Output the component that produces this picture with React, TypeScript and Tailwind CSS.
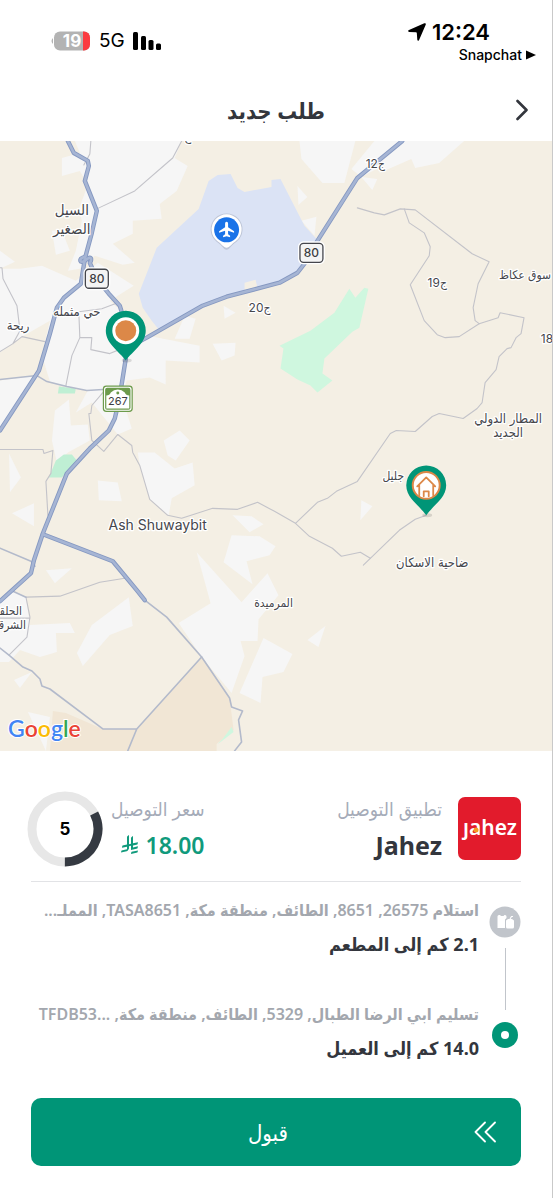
import type { ReactNode } from "react";

// ---------------------------------------------------------------------------
// Map data
// ---------------------------------------------------------------------------

const URBAN = [
  "M75 0H182L175 17L188 25L177 50L160 63L162 78L133 80V93L113 103L135 122L123 124L95 115L80 128L68 130L76 110L82 80L79 68L88 44L80 30L62 35V17L80 12Z",
  "M0 110L15 121L0 128ZM0 128L20 128L42 125L76 140L98 122L134 145L110 160L126 175L148 195L200 205V222L166 220V244L150 237L127 240L122 256L132 288L118 294L92 262L76 272L88 250L66 246L50 241L42 215L50 180L22 196L0 212Z",
  "M0 240L37 235L0 290ZM52 90H62L70 110L56 114ZM185 175L196 178L190 198L175 198Z",
  "M300 0H356L345 42H323L302 18ZM375 0H403L392 20L362 36L352 28ZM403 0H465L440 22L416 27L412 18L380 32ZM298 45L308 56L299 64ZM302 80L317 76L315 95Z",
  "M362 36L378 38L373 49ZM224 165L236 172L225 178ZM213 203L236 202L235 215L222 220ZM164 300L180 290L190 300L176 320L168 315Z",
  "M55 270L69 259L71 285L88 284L90 300L68 312L57 322L52 300ZM9 313L21 337L10 352ZM98 340L118 342L122 361L99 360ZM12 373L34 363V386Z",
  "M138 312L155 312L175 328L193 322L195 345L172 358L169 375L150 359L140 325Z",
  "M197 412L242 462L268 433L279 455L259 479L258 501H241L245 516L232 553L202 517L179 483L211 463Z",
  "M232 395L260 396L276 406L270 415L247 421L253 444L224 422ZM264 498L293 514L284 532L263 537L261 563L240 553ZM308 500L326 486L319 507Z",
  "M46 430L72 428L55 443ZM129 457L133 486L110 495L83 526L77 513L92 485ZM14 540L32 532L20 548ZM28 572L50 577L46 611Z",
  "M0 461L13 451L26 457L30 485L70 483L75 493L56 493L57 512L40 517L20 510L9 522H0ZM362 360L373 366L361 380ZM233 375L252 376L264 384L250 392Z",
];

const GREEN = [
  "M350 148L356 157L365 147L369 148L360 187L353 191L325 218L323 233L333 240L318 252L311 245L298 239L281 228L284 208L280 205L311 190L335 172Z",
];

const PARKS = [
  "M59 246L76 248L75 253H58Z",
  "M49 337L56 320L64 314H72L77 320L62 337Z",
];

const TRACKS = [
  "M182 0L173 17L135 50L97 68M91 0L90 13L84 24",
  "M0 127L2 127L3 138L17 165L20 190L13 203M0 211L13 203L22 196L45 201",
  "M79 173L80 197L72 215L66 245M80 197H92L91 209L110 213L122 208M79 171L102 168L118 162",
  "M103 252L92 265L91 273H89L92 300L104 311L118 294L132 305L133 312L140 325L150 359L168 375L182 378L213 368L238 369L258 362L275 371L296 383L310 396L333 408L342 416L361 412L371 418",
  "M0 309H43L44 313L53 310L51 333L46 341L48 375",
  "M296 383L318 362L328 358L337 351L358 341L391 293L397 290L416 291L433 276L440 273L464 278L478 268L483 262L486 242L497 229L500 216L508 208L512 207L517 197L522 193L525 177L501 172L499 177L480 183L460 196L446 197L438 194L425 180L411 144L430 115L431 106L425 92L410 82L405 68",
  "M358 67L375 72L385 74L401 68L416 69L473 113L490 121L479 143L474 167L476 180L480 183",
  "M364 425L400 390L416 379L427 375",
  "M26 457L60 456L100 442L125 438M26 457L30 477L27 497L9 515M0 478H30",
];

const MINOR = [
  "M0 239L37 235L47 241L67 246L87 250L103 249",
  "M0 408L31 421L35 426",
  "M13 451L26 457",
  "M145 460L167 477L202 517L230 558L232 567L243 571L239 580L242 602L235 611",
  "M202 517L137 589L128 611M137 589H103L50 549L42 546L40 539L32 531L23 527L9 515L0 508",
];

const HIGHWAYS = [
  "M68 0L74 12L88 20L89 25L85 40L97 70L92 92L85 118L81 143L64 157L57 167L50 193L39 230L0 290",
  "M85 116C78 118 80 123 85 120C94 112 91 122 90 122L97 138L109 153L120 165L126 185",
  "M130 206L147 197L203 165L227 156L280 142L298 132L305 123L318 100L358 37L403 0",
  "M126 218L122 243L118 265L115 278L109 290L90 308L67 333L43 393L34 420L31 433L0 461",
  "M43 394L113 421L137 450L145 460",
];

interface MapLabel {
  text: string;
  x: number;
  y: number;
  size: string;
}

const LABELS: MapLabel[] = [
  { text: "السيل",          x: 72,  y: 74,  size: "text-[15px]" },
  { text: "الصغير",         x: 72,  y: 93,  size: "text-[15px]" },
  { text: "حي مثمله",       x: 77,  y: 175, size: "text-[13px]" },
  { text: "ريحة",           x: 18,  y: 189, size: "text-[13px]" },
  { text: "ج12",            x: 376, y: 27,  size: "text-[12px]" },
  { text: "ج19",            x: 438, y: 146, size: "text-[12px]" },
  { text: "ج20",            x: 260, y: 171, size: "text-[12px]" },
  { text: "سوق عكاظ",       x: 526, y: 138, size: "text-[12px]" },
  { text: "18",             x: 548, y: 202, size: "text-[12px]" },
  { text: "المطار الدولي",  x: 509, y: 283, size: "text-[13px]" },
  { text: "الجديد",         x: 509, y: 297, size: "text-[13px]" },
  { text: "جليل",           x: 394, y: 340, size: "text-[12px]" },
  { text: "ضاحية الاسكان",  x: 433, y: 427, size: "text-[13px]" },
  { text: "المرميدة",       x: 274, y: 467, size: "text-[12px]" },
  { text: "الحلقة",         x: 8,   y: 475, size: "text-[12px]" },
  { text: "الشرقية",        x: 8,   y: 489, size: "text-[12px]" },
  { text: "Ash Shuwaybit",  x: 158, y: 390, size: "text-[14px]" },
];

// ---------------------------------------------------------------------------
// Map pieces
// ---------------------------------------------------------------------------

function RoadShield({ x, y }: { x: number; y: number }) {
  return (
    <g transform={`translate(${x} ${y})`}>
      <rect x="-12" y="-10" width="24" height="20" rx="4" fill="#f4f4f4" stroke="#fff" strokeWidth="3" />
      <rect x="-11.5" y="-9.5" width="23" height="19" rx="3.5" fill="#f4f4f4" stroke="#45464c" strokeWidth="1.3" />
      <text textAnchor="middle" y="4.5" className="font-['Inter'] text-[12px] font-medium" fill="#3c3d42">
        80
      </text>
    </g>
  );
}

function Pin({ x, y, children }: { x: number; y: number; children: ReactNode }) {
  return (
    <g transform={`translate(${x} ${y})`}>
      <ellipse cx="1" cy="0" rx="5" ry="2" fill="#000" opacity="0.12" />
      <path d="M0 0C-7 -10 -20 -17 -20 -30A20 20 0 0 1 20 -30C20 -17 7 -10 0 0Z" fill="#009577" />
      {children}
    </g>
  );
}

function DeliveryMap() {
  return (
    <svg viewBox="0 0 553 611" className="block h-auto w-full" role="img" aria-label="Map">
      <rect width="553" height="611" fill="#f4efe4" />
      <g fill="#f6f6f6">
        {URBAN.map((d) => <path key={d} d={d} />)}
      </g>
      <path d="M202 517L230 558L234 590L217 604V611H50L53 571L66 573L103 589H137Z" fill="#f1e6d5" />
      <path d="M232 587L234 592L221 602L218 604L223 599Z" fill="#cff7df" />
      <path
        d="M160 190L152 180L143 167L139 153L157 107L199 68L209 40L218 34L231 33L238 47L245 51L272 46V39L281 38L305 85L317 98L305 123L298 132L280 142L227 156L203 165Z"
        fill="#dbe3f5"
      />
      <path d="M245 142L256 139L258 147L245 150Z" fill="#f4efe4" />
      <g fill="#cff7df">
        {GREEN.map((d) => <path key={d} d={d} />)}
      </g>
      <g fill="#bfefd4">
        {PARKS.map((d) => <path key={d} d={d} />)}
      </g>
      <g fill="none" strokeLinejoin="round" strokeLinecap="round">
        <g stroke="#c3c3c9" strokeWidth="1.1">
          {TRACKS.map((d) => <path key={d} d={d} />)}
        </g>
        <g stroke="#b3bacb" strokeWidth="1.6">
          {MINOR.map((d) => <path key={d} d={d} />)}
        </g>
        <g stroke="#8598c1" strokeWidth="4.4">
          {HIGHWAYS.map((d) => <path key={d} d={d} />)}
        </g>
        <g stroke="#a6b5d4" strokeWidth="2.6">
          {HIGHWAYS.map((d) => <path key={d} d={d} />)}
        </g>
      </g>

      {/* Place names */}
      <g
        fill="#45464c"
        stroke="#fff"
        strokeWidth="2.5"
        strokeLinejoin="round"
        className="font-['Inter','DejaVu_Sans_Condensed','DejaVu_Sans',sans-serif] [paint-order:stroke]"
      >
        {LABELS.map((l) => (
          <text key={l.text} x={l.x} y={l.y} textAnchor="middle" className={l.size}>
            {l.text}
          </text>
        ))}
        <text x="188" y="0" textAnchor="middle" className="text-[12px]">ج</text>
      </g>

      <RoadShield x={97} y={138} />
      <RoadShield x={312} y={112} />

      {/* Route 267 */}
      <g transform="translate(118 258)">
        <rect x="-15" y="-13" width="30" height="26.5" rx="3.5" fill="#6d9b4c" />
        <rect x="-13.8" y="-11.8" width="27.6" height="24" rx="2.6" fill="#fff" />
        <rect x="-12.7" y="-10.8" width="25.4" height="22" rx="2" fill="#6d9b4c" />
        <path d="M-11.5 10V-3Q-8 -3 -7 -6Q-4 -9 0 -9Q4 -9 7 -6Q8 -3 11.5 -3V10Z" fill="#fff" />
        <circle cy="-5.5" r="1.5" fill="#6d9b4c" />
        <text textAnchor="middle" y="6" className="font-['Inter'] text-[11px]" fill="#3c3d42">267</text>
      </g>

      {/* Airport */}
      <g transform="translate(227 89)">
        <path d="M0 20C-3 20 -5 15 -10 12A16 16 0 1 1 10 12C5 15 3 20 0 20Z" fill="#aab2c4" opacity="0.6" />
        <path d="M0 18C-3 18 -5 14 -9 11.5A15 15 0 1 1 9 11.5C5 14 3 18 0 18Z" fill="#fff" />
        <circle r="12.5" fill="#1a73e8" />
        <path
          d="M0 -8C1 -8 1.5 -7 1.5 -6V-2.5L7.5 1.500V3L1.5 1V4.5L3.5 6V7.3L0 6.3L-3.5 7.3V6L-1.5 4.5V1L-7.5 3V1.5L-1.5 -2.5V-6C-1.5 -7 -1 -8 0 -8Z"
          fill="#fff"
        />
      </g>

      <Pin x={126} y={220}>
        <circle cy="-30" r="13.5" fill="#fff" />
        <circle cy="-30" r="10.5" fill="#dc8848" />
      </Pin>
      <Pin x={427} y={375}>
        <circle cy="-30" r="13.5" fill="#fff" stroke="#dc8848" strokeWidth="2" />
        <g fill="none" stroke="#dc8848" strokeWidth="1.8" strokeLinecap="round" strokeLinejoin="round">
          <path d="M-9 -29L0 -38L9 -29M-7 -30V-20M7 -30V-20M-2.5 -19V-24H2.5V-19" />
        </g>
      </Pin>

      <text
        x="8"
        y="597"
        direction="ltr"
        stroke="#fff"
        strokeWidth="2"
        className="font-['Lato'] text-[23px] font-semibold [paint-order:stroke]"
      >
        <tspan fill="#4285f4">G</tspan>
        <tspan fill="#ea4335">o</tspan>
        <tspan fill="#fbbc04">o</tspan>
        <tspan fill="#4285f4">g</tspan>
        <tspan fill="#34a853">l</tspan>
        <tspan fill="#ea4335">e</tspan>
      </text>
    </svg>
  );
}

// ---------------------------------------------------------------------------
// Header
// ---------------------------------------------------------------------------

function StatusBar() {
  return (
    <div dir="ltr" className="flex h-[72px] items-start justify-between pr-4 pl-[51px] pt-5 font-['Inter'] text-black">
      <div className="flex items-center gap-2 pt-[9px]">
        <svg viewBox="0 0 40 20" className="h-5 w-10" aria-hidden="true">
          <path d="M2 7Q-1 10 2 13Z" fill="#b3b3b3" />
          <rect x="3" y="0.5" width="36" height="19" rx="6" fill="#b3b3b3" />
          <path d="M32 0.5H33A6 6 0 0 1 39 6.5V13.5A6 6 0 0 1 33 19.5H32Z" fill="#fb3b40" />
          <text x="21" y="16" textAnchor="middle" className="text-[17px] font-bold" fill="#fff">19</text>
        </svg>
        <span className="text-[19px] leading-6">5G</span>
        <svg viewBox="0 0 28 18" className="h-[18px] w-7" aria-hidden="true">
          <rect width="5" height="18" rx="1.5" />
          <rect x="8" y="4" width="5" height="14" rx="1.5" />
          <rect x="15.5" y="8" width="5" height="10" rx="1.5" />
          <rect x="23" y="11.5" width="5" height="6.5" rx="1.5" />
        </svg>
      </div>
      <div className="flex flex-col items-end">
        <div className="flex items-center gap-[6px] pr-[46px]">
          <svg viewBox="0 0 18 18" className="size-[18px]" aria-hidden="true">
            <path d="M16.3 0.3Q18.3 -0.3 17.7 1.7L11.2 16.8Q10 19 9.3 16.8L8.8 10Q8.7 9.3 8 9.3L1.2 8.900Q-1 8.200 1 7Z" />
          </svg>
          <span className="text-[22px] leading-6 font-semibold">12:24</span>
        </div>
        <div className="flex items-center gap-1 pt-px">
          <span className="text-[14px] leading-5 font-medium">Snapchat</span>
          <svg viewBox="0 0 10 10" className="size-[10px]" aria-hidden="true">
            <path d="M0 0.5L10 5L0 9.5Z" />
          </svg>
        </div>
      </div>
    </div>
  );
}

function Header() {
  return (
    <header className="grid h-[69px] grid-cols-[40px_1fr_40px] items-center px-[10px] pt-[6px]">
      <button type="button" aria-label="رجوع" className="flex justify-center">
        <svg viewBox="0 0 12 22" className="h-[22px] w-3" fill="none" stroke="#33363d" strokeWidth="2.6" strokeLinecap="round" strokeLinejoin="round">
          <path d="M1.5 2L10.5 11L1.5 20" />
        </svg>
      </button>
      <h1 className="text-center text-[22px] leading-8 font-bold">طلب جديد</h1>
    </header>
  );
}

// ---------------------------------------------------------------------------
// Order summary
// ---------------------------------------------------------------------------

function JahezLogo() {
  return (
    <svg viewBox="0 0 63 63" className="size-[63px] shrink-0" aria-label="Jahez" role="img">
      <rect width="63" height="63" rx="7" fill="#e21b2c" />
      <text x="32" y="38" textAnchor="middle" direction="ltr" className="font-['Noto_Sans'] text-[21px] font-semibold" fill="#fff">
        ȷahez
      </text>
      <circle cx="18" cy="33" r="2.5" fill="#f59a23" />
    </svg>
  );
}

function RiyalSign() {
  return (
    <svg viewBox="0 0 1125 1257" className="h-[19px] w-[17px]" fill="currentColor" aria-label="ريال" role="img">
      <path d="M699.62 1113.02c-20.06 44.48-33.32 92.75-38.4 143.37l424.51-90.24c20.06-44.47 33.31-92.75 38.4-143.37l-424.51 90.24Z" />
      <path d="M1085.73 895.8c20.06-44.47 33.32-92.75 38.4-143.37l-330.68 70.33v-135.2l292.27-62.11c20.06-44.47 33.32-92.75 38.4-143.37l-330.68 70.27V66.13c-50.67 28.45-95.67 66.32-132.25 110.99v403.35l-132.25 28.11V0c-50.67 28.44-95.67 66.32-132.25 110.99v525.69l-295.91 62.88c-20.06 44.47-33.33 92.75-38.42 143.37l334.33-71.05v170.26l-358.3 76.14c-20.06 44.47-33.32 92.75-38.4 143.37l375.04-79.7c30.53-6.35 56.77-24.4 73.83-49.24l68.78-101.97c7.14-10.55 11.3-23.27 11.3-36.97v-149.98l132.25-28.11v270.4l424.53-90.28Z" />
    </svg>
  );
}

function Countdown({ seconds, ratio }: { seconds: number; ratio: number }) {
  const length = 2 * Math.PI * 33;
  return (
    <svg viewBox="0 0 76 76" className="size-[76px] shrink-0" role="timer">
      <circle cx="38" cy="38" r="33" fill="none" stroke="#e7e7e7" strokeWidth="9" />
      <circle
        cx="38"
        cy="38"
        r="33"
        fill="none"
        stroke="#353a42"
        strokeWidth="9"
        strokeDasharray={`${length * ratio} ${length}`}
        transform="rotate(-28 38 38)"
      />
      <text x="38" y="44" textAnchor="middle" className="font-['Inter'] text-[17px] font-bold" fill="#000">
        {seconds}
      </text>
    </svg>
  );
}

function OrderSummary() {
  return (
    <section className="flex items-center border-b border-[#e2e3e6] pt-10 pb-[14px]">
      <JahezLogo />
      <div className="mr-4">
        <p className="text-[19px] leading-8 text-[#a5abb8]">تطبيق التوصيل</p>
        <p className="text-[25px] leading-10 font-bold">
          <bdi>Jahez</bdi>
        </p>
      </div>
      <div className="mr-auto">
        <p className="text-[19px] leading-8 text-[#a5abb8]">سعر التوصيل</p>
        <p className="flex items-center gap-2 text-[23px] leading-10 font-semibold text-[#109a7c]">
          <span>18.00</span>
          <RiyalSign />
        </p>
      </div>
      <div className="mr-2 -ml-1">
        <Countdown seconds={5} ratio={0.328} />
      </div>
    </section>
  );
}

// ---------------------------------------------------------------------------
// Stops
// ---------------------------------------------------------------------------

function StopText({ address, distance }: { address: string; distance: string }) {
  return (
    <div className="min-w-0 flex-1">
      <p className="text-[16px] leading-8 font-semibold whitespace-nowrap text-[#a3a7ae]">{address}</p>
      <p className="text-[18px] leading-9 font-bold">{distance}</p>
    </div>
  );
}

function Stops() {
  return (
    <ol className="flex flex-col">
      <li className="flex gap-[10px] pt-3">
        <div className="flex w-8 shrink-0 flex-col items-center pt-3">
          <svg viewBox="0 0 32 32" className="size-8" aria-hidden="true">
            <circle cx="16" cy="16" r="15.5" fill="#c1c5cb" />
            <path d="M8.5 22V10.5Q8.5 9 10 9H11L12 10H14.5L15.5 9H16Q17.5 9 17.5 10.5V12L16 13.5V22Z" fill="#fff" />
            <path d="M17 14.5L19 13H23L25 14.5V21Q25 22.5 23.5 22.5H18.5Q17 22.5 17 21Z" fill="#fff" />
            <path d="M21 13L22.5 10.5H24" fill="none" stroke="#fff" strokeWidth="1.2" />
          </svg>
          <div className="mt-[10px] h-[62px] w-px bg-[#c1c5cb]" />
        </div>
        <StopText
          address="استلام 26575, 8651, الطائف, منطقة مكة, TASA8651, المملـ..."
          distance="2.1 كم إلى المطعم"
        />
      </li>
      <li className="-mt-3 flex gap-[10px]">
        <div className="flex w-8 shrink-0 flex-col items-center pt-6">
          <svg viewBox="0 0 26 26" className="size-[26px]" aria-hidden="true">
            <circle cx="13" cy="13" r="13" fill="#009577" />
            <circle cx="13" cy="13" r="4" fill="#fff" />
          </svg>
        </div>
        <StopText
          address={"تسليم ابي الرضا الطبال, 5329, الطائف, منطقة مكة, TFDB53...\u200e"}
          distance="14.0 كم إلى العميل"
        />
      </li>
    </ol>
  );
}

export default function App() {
  return (
    <main
      dir="rtl"
      className="w-full overflow-hidden border-r border-[#c9c9c9] bg-white font-['Noto_Sans','DejaVu_Sans_Condensed','DejaVu_Sans',sans-serif] text-[#33363d]"
    >
      <StatusBar />
      <Header />
      <DeliveryMap />
      <div className="px-[31px] pb-8">
        <OrderSummary />
        <Stops />
        <button
          type="button"
          className="mt-8 grid h-[68px] w-full grid-cols-[72px_1fr_56px] items-center rounded-[10px] bg-[#009577] text-white"
        >
          <svg viewBox="0 0 22 22" className="mx-auto size-[22px]" fill="none" stroke="currentColor" strokeWidth="1.8" strokeLinecap="round" strokeLinejoin="round" aria-hidden="true">
            <path d="M11 1.5L1.5 11L11 20.5M21 1.5L11.5 11L21 20.5" />
          </svg>
          <span className="text-center text-[22px] leading-8">قبول</span>
        </button>
      </div>
    </main>
  );
}
